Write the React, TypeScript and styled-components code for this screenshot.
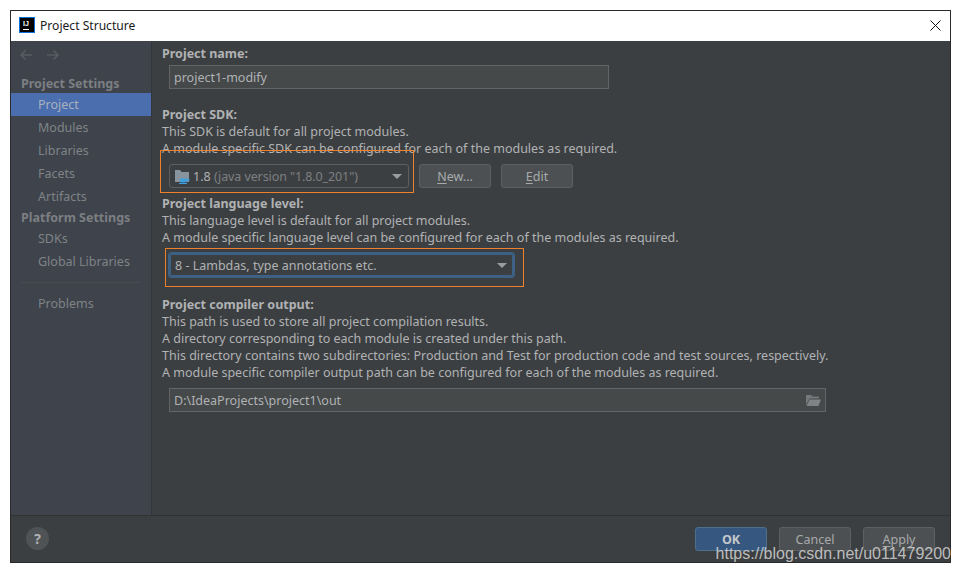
import styled, { createGlobalStyle } from 'styled-components';

const GlobalStyle = createGlobalStyle`
  html, body {
    margin: 0;
    padding: 0;
    background: #fff;
    overflow: hidden;
  }
  * {
    box-sizing: border-box;
  }
`;

const Page = styled.div`
  position: relative;
  width: 961px;
  height: 573px;
  padding: 10px 10px 10px 10px;
  font-family: 'Noto Sans', 'Noto Sans CJK SC', sans-serif;
  font-size: 12.5px;
`;

const Dialog = styled.div`
  display: flex;
  flex-direction: column;
  width: 941px;
  height: 553px;
  border: 1px solid #2b2b2b;
  background: #3c3f41;
`;

const TitleBar = styled.div`
  display: flex;
  align-items: center;
  flex: 0 0 30px;
  padding: 0 9px 2px 8px;
  gap: 5px;
  background: #fff;
  color: #1a1a1a;
  font-size: 12.1px;
`;

const AppIcon = styled.div`
  display: flex;
  flex-direction: column;
  width: 16px;
  height: 16px;
  padding: 2px 0 0 3px;
  background: #000;
  border: 1px solid #0a6fd8;
  color: #fff;
  font: bold 7px/7px 'Liberation Sans', sans-serif;

  i {
    display: block;
    width: 6px;
    height: 1px;
    margin-top: 2px;
    background: #fff;
  }
`;

const TitleText = styled.span`
  flex: 1;
`;

const Body = styled.div`
  display: flex;
  flex: 1;
  min-height: 0;
`;

const Sidebar = styled.div`
  display: flex;
  flex-direction: column;
  flex: 0 0 141px;
  background: #3e434c;
  border-right: 1px solid #33363a;
`;

const NavArrows = styled.div`
  display: flex;
  gap: 13px;
  height: 30px;
  padding: 7px 0 0 8px;
  color: #585c60;
`;

const GroupLabel = styled.div<{ $first?: boolean }>`
  height: ${(p) => (p.$first ? 20 : 19)}px;
  margin-top: ${(p) => (p.$first ? 2 : 0)}px;
  padding-left: 10px;
  line-height: ${(p) => (p.$first ? 22 : 20)}px;
  font-weight: 700;
  color: #7c7f82;
`;

const NavItem = styled.div<{ $active?: boolean }>`
  height: 23px;
  padding-left: 27px;
  line-height: 23px;
  color: ${(p) => (p.$active ? '#a9b0bd' : '#7f8386')};
  background: ${(p) => (p.$active ? '#4b6eaf' : 'transparent')};
`;

const NavDivider = styled.div`
  height: 1px;
  margin: 9px 10px 9px 10px;
  background: #484c50;
`;

const Main = styled.div`
  display: flex;
  flex-direction: column;
  flex: 1;
  padding: 4px 0 0 10px;
  color: #b0b2b4;
`;

const Label = styled.div<{ $top?: number }>`
  height: 17px;
  margin-top: ${(p) => p.$top ?? 0}px;
  line-height: 17px;
  font-weight: 700;
`;

const Line = styled.div`
  height: 17px;
  line-height: 17px;
  white-space: nowrap;
`;

const TextField = styled.div<{ $width: number; $top: number }>`
  display: flex;
  align-items: center;
  justify-content: space-between;
  width: ${(p) => p.$width}px;
  height: 24px;
  margin: ${(p) => p.$top}px 0 0 7px;
  padding: 0 4px;
  background: #45494a;
  border: 1px solid #646464;
`;

const ComboRow = styled.div`
  display: flex;
  gap: 10px;
  margin: 7px 0 0 7px;
`;

const Combo = styled.div<{ $width: number; $focus?: boolean }>`
  display: flex;
  align-items: center;
  gap: 2px;
  width: ${(p) => p.$width}px;
  height: 24px;
  padding: ${(p) => (p.$focus ? '1px 5px 0' : '0 5px')};
  background: #3c3f41;
  border: 1px solid ${(p) => (p.$focus ? '#3d6185' : '#5e6060')};
  border-radius: 3px;
  box-shadow: ${(p) => (p.$focus ? '0 0 0 1px #3d6185, inset 0 0 0 1px #3d6185' : 'none')};
`;

const ComboText = styled.span`
  flex: 1;
  white-space: nowrap;
`;

const Muted = styled.span`
  color: #7d7f81;
  letter-spacing: -0.1px;
`;

const Caret = styled.span`
  width: 0;
  height: 0;
  margin-right: 1px;
  border-left: 5px solid transparent;
  border-right: 5px solid transparent;
  border-top: 5px solid #9a9c9e;
`;

const Button = styled.div<{ $primary?: boolean }>`
  display: flex;
  align-items: center;
  justify-content: center;
  width: 72px;
  height: 24px;
  border: 1px solid ${(p) => (p.$primary ? '#4c708c' : '#5e6060')};
  border-radius: 3px;
  background: ${(p) => (p.$primary ? '#365880' : '#4c5052')};
  color: ${(p) => (p.$primary ? '#c5c8cb' : '#a8aaac')};
  font-weight: ${(p) => (p.$primary ? 700 : 400)};

  u {
    text-underline-offset: 2px;
  }
`;

const Footer = styled.div`
  display: flex;
  align-items: flex-start;
  justify-content: space-between;
  flex: 0 0 47px;
  padding: 11px 15px 0 15px;
  border-top: 1px solid #323232;
  background: #3c3f41;
`;

const HelpButton = styled.div`
  display: flex;
  align-items: center;
  justify-content: center;
  width: 23px;
  height: 23px;
  border-radius: 50%;
  background: #4f5355;
  color: #b0b2b4;
  font-weight: 700;
  font-size: 14px;
`;

const FooterButtons = styled.div`
  display: flex;
  gap: 12px;
`;

const Highlight = styled.div<{ $x: number; $y: number; $w: number; $h: number }>`
  position: absolute;
  left: ${(p) => p.$x}px;
  top: ${(p) => p.$y}px;
  width: ${(p) => p.$w}px;
  height: ${(p) => p.$h}px;
  border: 1px solid #f0812a;
  pointer-events: none;
`;

const Watermark = styled.div`
  position: absolute;
  right: 10px;
  top: 545px;
  color: rgba(222, 222, 222, 0.8);
  font: 16px/18px 'Liberation Sans', Arial, sans-serif;
  white-space: nowrap;
`;

const ArrowIcon = ({ flip }: { flip?: boolean }) => (
  <svg width="14" height="14" viewBox="0 0 14 14" style={flip ? { transform: 'scaleX(-1)' } : undefined}>
    <path d="M13 7H2M6.5 2.5L2 7l4.5 4.5" fill="none" stroke="currentColor" strokeWidth="1.6" />
  </svg>
);

const CloseIcon = () => (
  <svg width="11" height="11" viewBox="0 0 11 11">
    <path d="M.5.5l10 10M10.5.5l-10 10" stroke="#111" strokeWidth="1" fill="none" />
  </svg>
);

const SdkIcon = () => (
  <svg width="16" height="15" viewBox="0 0 16 15">
    <path d="M0 1h5l1.5 2H14v10H0z" fill="#87949d" />
    <path d="M5 9.5h6v2.5a1.5 1.5 0 0 1-1.5 1.5h-3A1.5 1.5 0 0 1 5 12z" fill="#3b9fe0" />
    <path d="M4 14.5h8" stroke="#3b9fe0" strokeWidth="1" />
    <path d="M11 10.2h3v1.6h-3" fill="none" stroke="#3b9fe0" strokeWidth="1" />
  </svg>
);

const FolderIcon = () => (
  <svg width="15" height="11" viewBox="0 0 15 11">
    <path d="M0 0h5l1.5 1.6H13V3.6H3.5L0 10z" fill="#74787a" />
    <path d="M3.5 4.5H15L12.5 11H.5z" fill="#7f8385" />
  </svg>
);

const App = () => {
  return (
    <Page>
      <GlobalStyle />
      <Dialog>
        <TitleBar>
          <AppIcon>
            IJ
            <i />
          </AppIcon>
          <TitleText>Project Structure</TitleText>
          <CloseIcon />
        </TitleBar>
        <Body>
          <Sidebar>
            <NavArrows>
              <ArrowIcon />
              <ArrowIcon flip />
            </NavArrows>
            <GroupLabel $first>Project Settings</GroupLabel>
            <NavItem $active>Project</NavItem>
            <NavItem>Modules</NavItem>
            <NavItem>Libraries</NavItem>
            <NavItem>Facets</NavItem>
            <NavItem>Artifacts</NavItem>
            <GroupLabel>Platform Settings</GroupLabel>
            <NavItem>SDKs</NavItem>
            <NavItem>Global Libraries</NavItem>
            <NavDivider />
            <NavItem>Problems</NavItem>
          </Sidebar>
          <Main>
            <Label>Project name:</Label>
            <TextField $width={440} $top={3}>project1-modify</TextField>
            <Label $top={17}>Project SDK:</Label>
            <Line>This SDK is default for all project modules.</Line>
            <Line>A module specific SDK can be configured for each of the modules as required.</Line>
            <ComboRow>
              <Combo $width={240}>
                <SdkIcon />
                <ComboText>
                  1.8 <Muted>(java version "1.8.0_201")</Muted>
                </ComboText>
                <Caret />
              </Combo>
              <Button>
                <span>
                  <u>N</u>ew...
                </span>
              </Button>
              <Button>
                <span>
                  <u>E</u>dit
                </span>
              </Button>
            </ComboRow>
            <Label $top={7}>Project language level:</Label>
            <Line>This language level is default for all project modules.</Line>
            <Line>A module specific language level can be configured for each of the modules as required.</Line>
            <ComboRow>
              <Combo $width={345} $focus>
                <ComboText>8 - Lambdas, type annotations etc.</ComboText>
                <Caret />
              </Combo>
            </ComboRow>
            <Label $top={19}>Project compiler output:</Label>
            <Line>This path is used to store all project compilation results.</Line>
            <Line>A directory corresponding to each module is created under this path.</Line>
            <Line>This directory contains two subdirectories: Production and Test for production code and test sources, respectively.</Line>
            <Line>A module specific compiler output path can be configured for each of the modules as required.</Line>
            <TextField $width={657} $top={7}>
              D:\IdeaProjects\project1\out
              <FolderIcon />
            </TextField>
          </Main>
        </Body>
        <Footer>
          <HelpButton>?</HelpButton>
          <FooterButtons>
            <Button $primary>OK</Button>
            <Button>Cancel</Button>
            <Button>
              <span>
                <u>A</u>pply
              </span>
            </Button>
          </FooterButtons>
        </Footer>
      </Dialog>
      <Highlight $x={160} $y={150} $w={254} $h={43} />
      <Highlight $x={165} $y={248} $w={359} $h={39} />
      <Watermark>https://blog.csdn.net/u011479200</Watermark>
    </Page>
  );
};

export default App;
